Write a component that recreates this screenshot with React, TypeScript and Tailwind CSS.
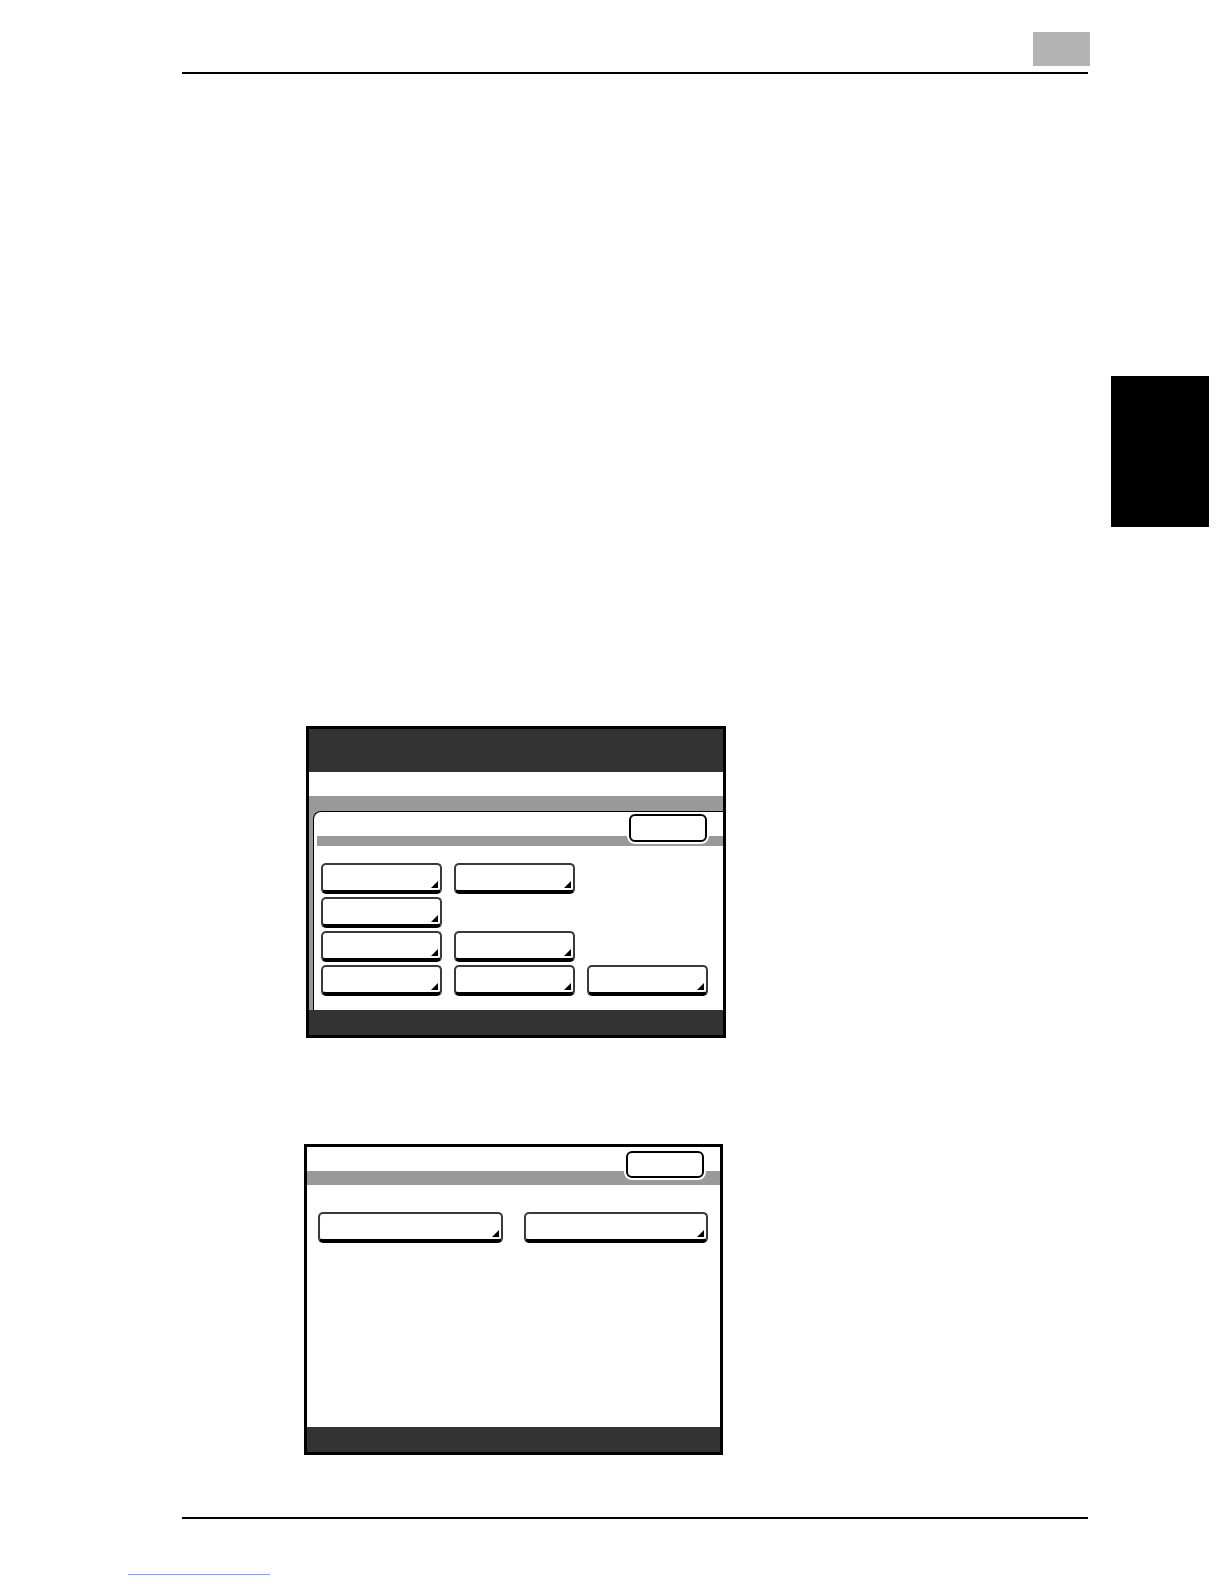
import React from "react";

function KeyButton() {
  return (
    <div className="relative h-[31px] rounded-[5px] border-2 border-[#3a3a3a] border-b-[4px] border-b-black bg-white">
      <svg className="absolute right-[2px] bottom-[2px]" width="7" height="7" viewBox="0 0 7 7">
        <polygon points="7,0 7,7 0,7" fill="#000" />
      </svg>
    </div>
  );
}

function Empty() {
  return <div className="h-[31px]" />;
}

function CloseButton({ className }: { className: string }) {
  return (
    <div
      className={
        "absolute w-[78px] rounded-[6px] border-2 border-black bg-white shadow-[0_0_0_2px_#fff] " +
        className
      }
    />
  );
}

export default function App() {
  return (
    <div className="w-[1224px] h-[1584px] bg-white overflow-hidden" style={{ fontFamily: '"Liberation Sans", Arial, sans-serif' }}>
      {/* Page header */}
      <div className="pt-[32px] pl-[182px] pr-[136px]">
        <div className="flex justify-end">
          <div className="w-[57px] h-[34px] bg-[#b3b3b3] -mr-[2px]" />
        </div>
        <div className="mt-[6px] h-[2px] bg-black" />
      </div>

      {/* Chapter tab */}
      <div className="mt-[302px] flex justify-end pr-[15px]">
        <div className="w-[98px] h-[151px] bg-black" />
      </div>

      {/* Screen 1 */}
      <div className="mt-[199px] ml-[306px] w-[420px] h-[312px] border-[3px] border-black flex flex-col">
        <div className="h-[43px] bg-[#333333]" />
        <div className="h-[24px] bg-white" />
        <div className="flex-1 bg-[#999999] pl-[4px] pt-[15px] flex">
          <div className="flex-1 bg-white rounded-tl-[8px] border-t border-l border-black relative">
            <div className="h-[24px]" />
            <div className="ml-[3px] h-[10px] bg-[#999999]" />
            <CloseButton className="right-[16px] top-[2px] h-[28px]" />
            <div className="mt-[17px] ml-[7px] grid grid-cols-[121px_121px_121px] gap-x-[12px] gap-y-[3px]">
              <KeyButton />
              <KeyButton />
              <Empty />
              <KeyButton />
              <Empty />
              <Empty />
              <KeyButton />
              <KeyButton />
              <Empty />
              <KeyButton />
              <KeyButton />
              <KeyButton />
            </div>
          </div>
        </div>
        <div className="h-[25px] bg-[#333333]" />
      </div>

      {/* Screen 2 */}
      <div className="mt-[106px] ml-[304px] w-[419px] h-[311px] border-[3px] border-black flex flex-col bg-white">
        <div className="relative">
          <div className="h-[24px]" />
          <div className="h-[14px] bg-[#999999]" />
          <CloseButton className="left-[319px] top-[4px] h-[27px]" />
        </div>
        <div className="mt-[27px] pl-[11px] grid grid-cols-[185px_184px] gap-x-[21px]">
          <KeyButton />
          <KeyButton />
        </div>
        <div className="flex-1" />
        <div className="h-[25px] bg-[#333333]" />
      </div>

      {/* Page footer */}
      <div className="mt-[62px] ml-[182px] mr-[136px] h-[2px] bg-black" />
      <div className="mt-[55px] ml-[128px] w-[142px] h-[1px] bg-[#8fa0ee]" />
    </div>
  );
}
